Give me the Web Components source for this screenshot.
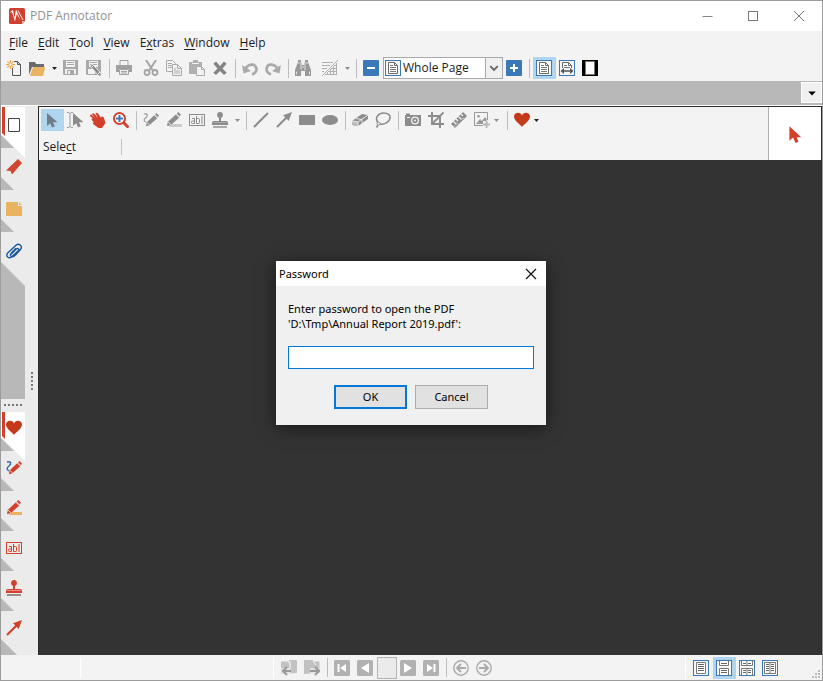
<!DOCTYPE html>
<html lang="en">
<head>
<meta charset="utf-8">
<title>PDF Annotator</title>
<style>
html, body { height: 100%; margin: 0; }
body { font: 12px/16px "Open Sans", "Noto Sans", sans-serif; color: #1c1c1c; }
</style>
</head>
<body>
<annotator-app></annotator-app>

<template id="app-template">
<style>
:host { display: flex; flex-direction: column; height: 100vh; box-sizing: border-box; border: 1px solid #9c9c9c; background: #f3f3f3; position: relative; overflow: hidden; }
.tabs { flex: none; height: 24px; background: #b8b8b8; border-bottom: 1px solid #fff; display: flex; justify-content: flex-end; align-items: flex-start; }
.tabs button { width: 21px; height: 21px; margin-top: 1px; padding: 0; border: 1px solid #fff; background: #f0f0f0; display: grid; place-items: center; }
.body { flex: 1; display: flex; min-height: 0; }
.work { flex: 1; display: flex; flex-direction: column; background: #333; border: 1px solid #2b2b2b; border-bottom: 0; min-width: 0; }
.tools { display: flex; background: #f3f3f3; height: 53px; flex: none; }
.left { flex: 1; padding: 2px; display: flex; flex-direction: column; }
.mode { display: flex; align-items: center; justify-content: space-between; width: 79px; height: 18px; margin-top: 7px; padding-left: 2px; border: 0; }
.mode i { width: 1px; height: 16px; background: #b9c4d2; }
.current { width: 52px; background: #fff; border-left: 1px solid #b0b0b0; display: grid; place-items: center; }
u { text-underline-offset: 2px; }
.overlay { position: absolute; inset: 5px 1px 0 0; display: grid; place-items: center; pointer-events: none; }
pass-dialog { pointer-events: auto; }
</style>
<title-bar>PDF Annotator</title-bar>
<menu-bar>
  <menu-item><u>F</u>ile</menu-item><menu-item><u>E</u>dit</menu-item><menu-item><u>T</u>ool</menu-item><menu-item><u>V</u>iew</menu-item><menu-item>E<u>x</u>tras</menu-item><menu-item><u>W</u>indow</menu-item><menu-item><u>H</u>elp</menu-item>
</menu-bar>
<tool-bar class="main">
  <tool-button icon="new" label="New"></tool-button><tool-button icon="open" label="Open" arrow="dark"></tool-button><tool-button icon="save" label="Save"></tool-button><tool-button icon="saveas" label="Save as"></tool-button>
  <tool-sep></tool-sep>
  <tool-button icon="print" label="Print"></tool-button><tool-gap></tool-gap><tool-button icon="cut" label="Cut"></tool-button><tool-button icon="copy" label="Copy"></tool-button><tool-button icon="paste" label="Paste"></tool-button><tool-button icon="delete" label="Delete"></tool-button>
  <tool-sep></tool-sep>
  <tool-button icon="undo" label="Undo"></tool-button><tool-button icon="redo" label="Redo"></tool-button>
  <tool-sep></tool-sep>
  <tool-button icon="find" label="Find"></tool-button><tool-gap></tool-gap><tool-button icon="grid" label="Grid" arrow="gray"></tool-button>
  <tool-sep></tool-sep>
  <tool-button icon="minus" label="Zoom out"></tool-button><zoom-box></zoom-box><tool-button icon="plus" label="Zoom in"></tool-button>
  <tool-sep></tool-sep>
  <tool-button icon="page" label="Whole page" active></tool-button><tool-button icon="pagewidth" label="Page width"></tool-button><tool-button icon="full" label="Full screen"></tool-button>
</tool-bar>
<div class="tabs"><button aria-label="Document list"><ui-icon name="downblack" size="10"></ui-icon></button></div>
<div class="body">
  <side-bar></side-bar>
  <main class="work">
    <div class="tools">
      <div class="left">
        <tool-bar>
          <tool-button icon="select" label="Select" active></tool-button><tool-button icon="textsel" label="Select text"></tool-button><tool-button icon="hand" label="Pan"></tool-button><tool-button icon="zoom" label="Zoom"></tool-button>
          <tool-sep></tool-sep>
          <tool-button icon="pen" label="Pen"></tool-button><tool-button icon="marker" label="Marker"></tool-button><tool-button icon="text" label="Text"></tool-button><tool-button icon="stamp" label="Stamp" arrow="gray"></tool-button>
          <tool-sep></tool-sep>
          <tool-button icon="line" label="Line"></tool-button><tool-button icon="arrow" label="Arrow"></tool-button><tool-button icon="rect" label="Rectangle"></tool-button><tool-button icon="ellipse" label="Ellipse"></tool-button>
          <tool-sep></tool-sep>
          <tool-button icon="eraser" label="Eraser"></tool-button><tool-button icon="lasso" label="Lasso"></tool-button>
          <tool-sep></tool-sep>
          <tool-button icon="camera" label="Snapshot"></tool-button><tool-button icon="crop" label="Crop"></tool-button><tool-button icon="ruler" label="Measure"></tool-button><tool-button icon="image" label="Insert image" arrow="gray" near></tool-button>
          <tool-sep></tool-sep>
          <tool-button icon="heart" label="Favorites" arrow="dark" near></tool-button>
        </tool-bar>
        <div class="mode"><span>Sele<u>c</u>t</span><i></i></div>
      </div>
      <div class="current"><ui-icon name="redcursor" size="18"></ui-icon></div>
    </div>
  </main>
</div>
<status-bar></status-bar>
<div class="overlay"><pass-dialog heading="Password">Enter password to open the PDF<br>'D:\Tmp\Annual Report 2019.pdf':</pass-dialog></div>
</template>

<script>
const pencil = (body, line) => `<path d="M1 15l1-4.500L11 2l3.500 3.500L5 14z" fill="${body}"/><path d="M11.500 1.500L13 0l3 3-1.500 1.500z" fill="${body}"/><path d="M2.300 10.700l3 3M10.500 2.300l3.500 3.500" stroke="${line}" stroke-width="1"/>`;
const abl = c => `<rect x=".5" y="2.500" width="15" height="11" fill="none" stroke="${c}"/><path d="M3 6.500H5.500V11.500H3.500Q2.500 11.500 2.500 10.500V10Q2.500 9 3.500 9H5.500M7.500 4V11.500H9.500Q10.500 11.500 10.500 10.500V7.500Q10.500 6.500 9.500 6.500H7.500M13 4V12" fill="none" stroke="${c}"/>`;
const stamp = (c, d, e) => `<circle cx="8" cy="2.900" r="2.900" fill="${c}"/><path d="M7 5h2v5H7z" fill="${c}"/><path d="M0 13V11Q0 9 2 9H14q2 0 2 2v2z" fill="${c}"/><path d="M1 10.500h14" stroke="${d}"/><path d="M1 15h14" stroke="${e}" stroke-width="1.400"/>`;
const arrowUp = c => `<path d="M1 15L12 4" stroke="${c}" stroke-width="2.200"/><path d="M16 0l-3.300 9-2.700-3-3-2.700z" fill="${c}"/>`;
const cursor = (c, x = 0) => `<path d="M${3 + x} 1v13l3.200-2.800L${8 + x} 15.500l2.800-1.200L${9 + x} 10.200H${13.500 + x}z" fill="${c}"/>`;
const heart = '<path d="M8 15C6 12 0 9 0 4.500 0 2 2 .8 4 .8c2 0 3.400 1 4 2.600C8.600 1.800 10 .8 12 .8c2 0 4 1.200 4 3.700C16 9 10 12 8 15z" fill="#c5391b"/>';
const frame = inner => `<rect x=".5" y=".5" width="15" height="15" fill="#f7f7f7" stroke="#3d78b6"/>${inner}`;
const sheet = '<path d="M3.500 2.500h6l3 3v8h-9z" fill="#fff" stroke="#6b6b6b"/><path d="M9.500 2.500v3h3" fill="none" stroke="#6b6b6b"/>';
const nav = d => `<rect width="16" height="16" rx="1.500" fill="#b1b1b1"/><path d="${d}" fill="#fff"/>`;
const icons = {
  logo: '<path d="M0 1.500Q0 0 1.500 0H14.500Q16 0 16 1.500V13l-3 3H1.500Q0 16 0 14.500z" fill="#cf412e"/><path d="M16 13l-3 3v-3z" fill="#f5b1a8"/><path d="M.5 4.500L4 2l1.500 8L7 1.500 11.500 12 7.800 6 6 13.500 3 4z" fill="#fff"/><path d="M9 2.500l5 9.500" stroke="#fff" stroke-width=".9"/>',
  minimize: '<path d="M3.500 8.500h10" stroke="#888"/>',
  maximize: '<rect x="3.500" y="3.500" width="9" height="9" fill="none" stroke="#777"/>',
  close: '<path d="M3 3l10 10M13 3L3 13" stroke="#777" fill="none"/>',
  closedark: '<path d="M3 3l10 10M13 3L3 13" stroke="#111" stroke-width="1.200" fill="none"/>',
  new: '<path d="M6.500 8V15.500h8V4.500l-3-3H8M11.500 1.500v3h3" fill="none" stroke="#555"/><path d="M4.500 0v9M0 4.500h9M1.300 1.300l6.400 6.400M7.700 1.300L1.300 7.700" stroke="#e8a94c" stroke-width="1.200"/><circle cx="4.500" cy="4.500" r="1.200" fill="#f3f3f3"/>',
  open: '<path d="M0 15V2h6l1 2h8v3H3z" fill="#6b6b6b"/><path d="M1 16L4 7h12.500L14 16z" fill="#eab362"/>',
  save: '<path d="M0 0h15v15H1L0 14z" fill="#a8a8a8"/><path d="M3 1h9v6H3z" fill="#f3f3f3"/><path d="M4 2.500h7M4 4.500h7" stroke="#a8a8a8"/><path d="M2 9h11v5H2z" fill="#f3f3f3"/><path d="M4 10h7v4H4z" fill="#a8a8a8"/><path d="M5 11h2v3H5z" fill="#f3f3f3"/>',
  saveas: '<path d="M0 0h15v15H1L0 14z" fill="#a8a8a8"/><path d="M3 1h9v6H3zM2 9h7v5H2z" fill="#f3f3f3"/><path d="M4 2.500h7M4 4.500h7" stroke="#a8a8a8"/><path d="M4 6l2-2 9 9v3h-2z" fill="#8b8b8b" stroke="#f3f3f3" stroke-width=".8"/><path d="M5.500 7.500l2-2M12 14l2-2" stroke="#f3f3f3"/>',
  print: '<path d="M4 5V.5h8V5" fill="#f3f3f3" stroke="#a0a0a0"/><path d="M0 5h16v7h-3V9H3v3H0z" fill="#a0a0a0"/><path d="M3.500 9.500h9v5h-9z" fill="#f3f3f3" stroke="#a0a0a0"/><path d="M5 11.500h6M5 13h6" stroke="#a0a0a0"/>',
  cut: '<path d="M3 0l6.500 10M13 0L6.500 10" stroke="#a5a5a5" stroke-width="2"/><circle cx="4" cy="12.500" r="2.500" fill="none" stroke="#a5a5a5" stroke-width="1.800"/><circle cx="12" cy="12.500" r="2.500" fill="none" stroke="#a5a5a5" stroke-width="1.800"/>',
  copy: '<path d="M.5.5h6l3 3v8h-9z" fill="#f3f3f3" stroke="#aaa"/><path d="M2 3.500h4M2 5.500h5M2 7.500h5" stroke="#aaa"/><path d="M6.500 4.500h5l4 4v7h-9z" fill="#f3f3f3" stroke="#aaa"/><path d="M11.500 4.500v4h4M8 9h2M8 11h6M8 13h6" fill="none" stroke="#aaa"/>',
  paste: '<path d="M0 2h4V0h5v2h4v4H7v8H0z" fill="#b0b0b0"/><path d="M3 3.500h7" stroke="#f3f3f3"/><path d="M7.500 6.500h5l3 3v6h-8z" fill="#f3f3f3" stroke="#aaa"/><path d="M12.500 6.500v3h3" fill="none" stroke="#aaa"/>',
  delete: '<path d="M4 1.500L8 6l4-4.500 2.700 2.200L10.500 8.500l4.200 4.200L12 15l-4-4-4 4-2.700-2.300L5.500 8.500 1.300 3.700z" fill="#858585"/>',
  undo: '<path d="M3 10C5.500 3.500 13 3 14.300 8c.8 3-1 5-4.300 6.500" fill="none" stroke="#aaa" stroke-width="2.700"/><path d="M0 5l1.500 8.500L9 11z" fill="#aaa"/>',
  redo: '<path d="M13 10C10.500 3.500 3 3 1.700 8c-.8 3 1 5 4.300 6.500" fill="none" stroke="#aaa" stroke-width="2.700"/><path d="M16 5l-1.500 8.500L7 11z" fill="#aaa"/>',
  find: '<path d="M3 0h3v2l1 3h2l1-3V0h3v2l3 8v6h-6v-5H6v5H0v-6l3-8z" fill="#999"/><path d="M6 4v6M10 4v6M7 7h2M1.500 11.500v3M14.500 11.500v3M3 3h3M10 3h3" stroke="#f3f3f3" stroke-width=".8"/>',
  grid: '<path d="M0 2.500h11M0 5.500h8M0 8.500h5M0 11.500h2M3 14.500h12M6 11.500h9M9 8.500h6M12 5.500h3M14.500 3v12M11.500 6v9M8.500 9v6M5.500 12v3" stroke="#b0b0b0"/><path d="M0 16L16 0" stroke="#b0b0b0"/>',
  minus: '<rect width="16" height="16" rx="1" fill="#3b78b7"/><path d="M4 8h8" stroke="#fff" stroke-width="2"/>',
  plus: '<rect width="16" height="16" rx="1" fill="#3b78b7"/><path d="M4 8h8M8 4v8" stroke="#fff" stroke-width="2"/>',
  page: frame(sheet + '<path d="M5 5.500h3M5 7.500h6M5 9.500h6M5 11.500h6" stroke="#777"/>'),
  pagewidth: frame(sheet + '<path d="M5 5.500h3M5 7.500h6" stroke="#777"/><path d="M2 8h12v6H2z" fill="#f5f5f5"/><path d="M3 11h10" stroke="#555" stroke-width="1.500"/><path d="M1.500 11L5 8v6zM14.500 11L11 8v6z" fill="#555"/>'),
  full: '<path d="M0 0h16v16H0z" fill="#000"/><path d="M3.500 1.500h9v13h-9z" fill="#fff" stroke="#777"/>',
  down: '<path d="M2 5l6 6 6-6" fill="none" stroke="#666" stroke-width="3"/>',
  downblack: '<path d="M2 5.500h12L8 12z" fill="#000"/>',
  select: cursor('#6f7d87'),
  redcursor: '<path d="M3 1v13l3.300-2.800L8.500 16l2.500-1.200-1.500-4H13.500z" fill="#d2402b"/>',
  textsel: '<path d="M0 .5h2l1 1 1-1h2M3 1v14M0 15.500h2l1-1 1 1h2" fill="none" stroke="#999"/>' + cursor('#8c8c8c', 3),
  hand: '<path d="M0 3q1-1 2 0l3 3-3-4q1-1.500 2.300-.3L8 6 5.500 1.500Q7 .2 8 1.500l3 4.300.3-1Q13 4 14 6l1.500 5-3.500 5H8.500L3 12q-.8-1.700 1-1.400L1.500 7.500Q1.500 6 3 6.500L.2 4.200z" fill="#d2402b"/>',
  zoom: '<circle cx="6.500" cy="6.500" r="5.500" fill="#fff" stroke="#d2402b" stroke-width="2"/><path d="M10.500 10.500l5 5" stroke="#d2402b" stroke-width="3"/><path d="M3 6.500h7M6.500 3v7" stroke="#3b78b7" stroke-width="2"/>',
  pen: '<path d="M1 2c4-1 4 2 2 3.500C1 7 0 9 3 10" fill="none" stroke="#999" stroke-width="1.200"/>' + '<g transform="translate(2 1) scale(.88)">' + pencil('#8c8c8c', '#f3f3f3') + '</g>',
  redpen: '<path d="M1 2c5-1 4 2 2 4C1 7.500 0 9 3 11" fill="none" stroke="#2f6fb5" stroke-width="1.500"/>' + '<g transform="translate(2 1) scale(.88)">' + pencil('#d2402b', '#ebebeb') + '</g>',
  marker: '<path d="M6 12h10v3H3z" fill="#ccc"/>' + '<g transform="scale(.94)">' + pencil('#8c8c8c', '#f3f3f3') + '</g>',
  redmarker: '<path d="M6 12h10v3H3z" fill="#eab362"/>' + '<g transform="scale(.94)">' + pencil('#d2402b', '#ebebeb') + '</g>',
  text: abl('#8c8c8c'), redtext: abl('#d2402b'),
  stamp: stamp('#8c8c8c', '#a8a8a8', '#8c8c8c'), redstamp: stamp('#d2402b', '#f08a90', '#77645c'),
  line: '<path d="M1 15L15 1" stroke="#8c8c8c" stroke-width="2"/>',
  arrow: arrowUp('#8c8c8c'), redarrow: arrowUp('#d2402b'),
  rect: '<path d="M0 3h16v10H0z" fill="#8c8c8c"/>',
  ellipse: '<ellipse cx="8" cy="8" rx="8" ry="5" fill="#8c8c8c"/>',
  eraser: '<path d="M0 9l10-7 6 1v4L6 14l-6-1z" fill="#8c8c8c"/><path d="M0 9l6 1v4l-6-1z" fill="#bbb"/><path d="M0 9l6 1L16 3M6 10v4M4 6.500l6 1v3.500" fill="none" stroke="#f3f3f3" stroke-width=".9"/>',
  lasso: '<path d="M3 11C-1 5 4 1 9 1c4 0 6.500 2 6 5-.5 4-6 7-10 6" fill="none" stroke="#8c8c8c" stroke-width="1.600"/><circle cx="3.500" cy="11.500" r="1.500" fill="#f3f3f3" stroke="#8c8c8c"/><path d="M3 13l-1.500 2.500" stroke="#8c8c8c" stroke-width="1.500"/>',
  camera: '<path d="M0 3h1V1.500h4V3h11v11H0z" fill="#8c8c8c"/><circle cx="10" cy="8.500" r="4" fill="#f3f3f3"/><circle cx="10" cy="8.500" r="2.700" fill="#8c8c8c"/><circle cx="10" cy="8.500" r="1" fill="#f3f3f3"/><path d="M2 5.500h3" stroke="#f3f3f3"/>',
  crop: '<path d="M4 0v12h12M0 4h12v12M4.500 11.500L15.500.5" fill="none" stroke="#8c8c8c" stroke-width="1.900"/>',
  ruler: '<path d="M0 12L12 0l4 4L4 16z" fill="#8c8c8c"/><path d="M2.500 9.500l3 3M5 7l2 2M7.500 4.500l3 3M10 2l2 2" stroke="#f3f3f3" stroke-width="1.200"/><path d="M3 13.500l1 1M6 10.500l1 1M11.500 6l1 1" stroke="#f3f3f3"/>',
  image: '<path d="M9 13.500H.5V.5h13V8" fill="none" stroke="#999"/><path d="M2 12l4-5 2 2 3-4 1.500 2v2H9v3z" fill="#999"/><circle cx="4.500" cy="4.300" r="1.300" fill="#999"/><path d="M12.500 9v7M9 12.500h7" stroke="#b9b9b9" stroke-width="2"/>',
  heart,
  pages: '<path d="M2.500 1.500h11v13h-11z" fill="#fff" stroke="#444"/>',
  bookmark: '<path d="M12 0l4 4L6 15.500 4.500 12 0 11.500z" fill="#cf472f"/>',
  note: '<path d="M0 1h12v4h4v10H0z" fill="#eab362"/><path d="M13 1l3 3h-3z" fill="#eab362"/>',
  clip: '<path d="M4.500 11.500l6-6q1.500-1 2 .2t-.5 2l-6.500 6q-2 1.500-3.800 0t0-4L10 2q2.200-2 4.200-.3t.5 4.300l-6 6.500q-2 1.700-3.500.7t0-3.200L10 5" transform="translate(0 .3)" fill="none" stroke="#1a58a0" stroke-width="1.400"/>',
  back: '<path d="M0 14V1.500h8V0h7l1 1v12z" fill="#c2c2c2"/><path d="M7 1.500L10 5M9 1v12" stroke="#f3f3f3"/><path d="M0 8h9v7H0z" fill="#f3f3f3" fill-opacity=".6"/><path d="M10 11H2M6 7l-4 4 4 4" fill="none" stroke="#999" stroke-width="2"/>',
  forward: '<path d="M0 14V0h9l1 1.500h5.500V13z" fill="#c2c2c2"/><path d="M9 1l3 4" stroke="#f3f3f3"/><path d="M6 8h9v7H6z" fill="#f3f3f3" fill-opacity=".6"/><path d="M6 11h9M11 7l4 4-4 4" fill="none" stroke="#999" stroke-width="2"/>',
  first: nav('M3.500 4h2v8h-2zM12 4v8L6 8z'), prev: nav('M12 3v10L4 8z'), next: nav('M4 3v10l8-5z'), last: nav('M10.500 4h2v8h-2zM4 4v8l6-4z'),
  left: '<circle cx="8" cy="8" r="7.200" fill="none" stroke="#aaa" stroke-width="1.400"/><path d="M13 8H4M8 4L4 8l4 4" fill="none" stroke="#aaa" stroke-width="1.900"/>',
  right: '<circle cx="8" cy="8" r="7.200" fill="none" stroke="#aaa" stroke-width="1.400"/><path d="M3 8h9M8 4l4 4-4 4" fill="none" stroke="#aaa" stroke-width="1.900"/>',
  single: frame('<path d="M3.500 2.500h9v11h-9z" fill="#fff" stroke="#777"/><path d="M5 4.500h6M5 6.500h6M5 8.500h6M5 10.500h6" stroke="#666"/>'),
  continuous: frame('<path d="M3.500 1v4.500h9V1M3.500 15V8.500h9V15" fill="#fff" stroke="#777"/><path d="M5 3.500h6M5 10.500h6M5 12.500h6" stroke="#666"/>'),
  facingcont: frame('<path d="M2.500 1v4.500h11V1M8 1v4.500M2.500 15V8.500h11V15M8 8v7" fill="#fff" stroke="#777"/><path d="M4 3.500h3M9 3.500h3M4 10.500h3M9 10.500h3M4 12.500h3M9 12.500h3" stroke="#666"/>'),
  facing: frame('<path d="M2.500 2.500h11v11h-11zM8 2v12" fill="#fff" stroke="#777"/><path d="M4 4.500h3M9 4.500h3M4 6.500h3M9 6.500h3M4 8.500h3M9 8.500h3M4 10.500h3M9 10.500h3" stroke="#666"/>'),
  grip: '<path d="M12 6h2v2h-2zM9 9h2v2H9zM12 9h2v2h-2zM6 12h2v2H6zM9 12h2v2H9zM12 12h2v2h-2z" fill="#bdbdbd"/>'
};

function define(name, render) {
  customElements.define(name, class extends HTMLElement {
    connectedCallback() {
      if (!this.shadowRoot) this.attachShadow({ mode: 'open' }).innerHTML = render(this);
    }
  });
}
const attr = (el, name, fallback = '') => el.getAttribute(name) ?? fallback;

define('ui-icon', el => {
  const s = attr(el, 'size', '16');
  return `<style>:host{display:inline-block;width:${s}px;height:${s}px;flex:none}svg{display:block}</style><svg width="${s}" height="${s}" viewBox="0 0 16 16" aria-hidden="true">${icons[attr(el, 'name')]}</svg>`;
});
define('title-bar', () => `<style>
:host{display:flex;align-items:center;height:30px;flex:none;background:#fff;color:#919191;padding-left:8px}
span{flex:1;padding-left:5px}
button{border:0;background:none;width:46px;height:29px;padding:0;display:grid;place-items:center}
</style><ui-icon name="logo"></ui-icon><span><slot></slot></span>
<button aria-label="Minimize"><ui-icon name="minimize"></ui-icon></button><button aria-label="Maximize"><ui-icon name="maximize"></ui-icon></button><button aria-label="Close"><ui-icon name="close"></ui-icon></button>`);
define('menu-bar', () => `<style>:host{display:flex;height:24px;flex:none;align-items:center;padding-left:3px}nav{display:flex}</style><nav><slot></slot></nav>`);
define('menu-item', () => `<style>:host{display:block}button{border:0;background:none;font:inherit;color:inherit;padding:0 5px;text-underline-offset:2px}</style><button><slot></slot></button>`);
define('tool-bar', () => `<style>:host{display:flex;height:22px;flex:none}:host(.main){height:26px;padding:2px;box-sizing:border-box}</style><slot></slot>`);
define('tool-gap', () => `<style>:host{display:block;width:4px}</style>`);
define('tool-sep', () => `<style>:host{display:block;width:1px;margin:0 3px;background:#bdbdbd;height:19px;align-self:center}</style>`);
define('tool-button', el => {
  const a = attr(el, 'arrow'), near = el.hasAttribute('near');
  return `<style>:host{display:block;flex:none}
button{display:flex;align-items:center;height:22px;padding:0;border:0;background:none}
.i{width:23px;height:22px;padding-left:3px;box-sizing:border-box;display:flex;align-items:center;background:${el.hasAttribute('active') ? '#afd5ef' : 'none'}}
.a{width:${near ? 10 : 11}px;display:flex;justify-content:${near ? 'flex-start' : 'center'}}
</style><button aria-label="${attr(el, 'label')}"><span class="i"><ui-icon name="${attr(el, 'icon')}"></ui-icon></span>${a ? `<span class="a"><svg width="5" height="3"><path d="M0 0h5L2.500 3z" fill="${a === 'dark' ? '#222' : '#8c8c8c'}"/></svg></span>` : ''}</button>`;
});
define('zoom-box', () => `<style>
:host{display:grid;grid-template-columns:19px 1fr 17px;align-items:center;width:120px;height:22px;box-sizing:border-box;border:1px solid #a9a9a9;background:#fff}
ui-icon{grid-row:1}.p{grid-column:1;margin-left:1px}
select{grid-row:1;grid-column:1/4;width:100%;height:20px;appearance:none;border:0;background:none;font:inherit;color:inherit;padding:0 0 0 19px;z-index:1}
.d{grid-row:1;grid-column:3;height:20px;display:grid;place-items:center;background:#f0f0f0;border-left:1px solid #a9a9a9}
</style><ui-icon class="p" name="page"></ui-icon><span class="d"><ui-icon name="down" size="10"></ui-icon></span><select aria-label="Zoom"><option>Whole Page</option></select>`);
define('side-tab', el => {
  const active = el.hasAttribute('active');
  const h = Number(attr(el, 'h', '42'));
  const t = h - 13;
  return `<style>:host{display:block;height:${h}px;position:relative}
button{width:24px;height:100%;padding:${attr(el, 'pad', '11')}px 0 0 5px;border:0;background:none;display:flex;align-items:flex-start}
ui-icon{position:relative}
svg{position:absolute;left:0;top:0;overflow:visible}
</style><svg width="24" height="${h}" aria-hidden="true">${active ? `<path d="M0 1h24v${h + 9}L0 ${t - 1}z" fill="#fff"/><path d="M1 1h3v${t}l-3-3z" fill="#d2402b"/>` : ''}${el.hasAttribute('end') ? '' : `<path d="M0 ${t}l13 13H0z" fill="#b8b8b8"/>`}</svg>
<button aria-label="${attr(el, 'label')}"><ui-icon name="${attr(el, 'icon')}"></ui-icon></button>`;
});
define('side-bar', () => `<style>
:host{display:flex;width:37px;flex:none;background:#ebebeb}
.tabs{width:24px;display:flex;flex-direction:column}
.fill{flex:1;margin-top:-12px;background:#b8b8b8;clip-path:polygon(0 0,100% 24px,100% 100%,0 100%)}
.dots{height:12px;display:flex;align-items:center;justify-content:center;gap:2px}
.dots i,.grip i{width:2px;height:2px;background:#777}
.grip{flex:1;display:flex;flex-direction:column;align-items:center;justify-content:center;gap:2px}
.end{height:16px;margin-top:-12px;width:16px;background:#b8b8b8;clip-path:polygon(0 0,100% 100%,0 100%)}
</style><div class="tabs">
<side-tab icon="pages" label="Pages" active></side-tab><side-tab icon="bookmark" label="Bookmarks"></side-tab><side-tab icon="note" label="Notes"></side-tab><side-tab icon="clip" label="Attachments" end></side-tab>
<div class="fill"></div><div class="dots"><i></i><i></i><i></i><i></i><i></i></div>
<side-tab h="40" pad="9" icon="heart" label="Favorites" active></side-tab><side-tab h="40" pad="9" icon="redpen" label="Pen"></side-tab><side-tab h="40" pad="9" icon="redmarker" label="Marker"></side-tab><side-tab h="40" pad="9" icon="redtext" label="Text"></side-tab><side-tab h="40" pad="9" icon="redstamp" label="Stamp"></side-tab><side-tab h="40" pad="9" icon="redarrow" label="Arrow" end></side-tab>
<div class="end"></div></div><div class="grip"><i></i><i></i><i></i><i></i><i></i></div>`);
define('status-bar', () => `<style>
:host{display:flex;height:25px;flex:none;align-items:center}
.c{border-right:1px solid #fff;height:20px;box-sizing:border-box}.c1{width:80px}.c2{width:193px}
.n{display:flex;align-items:center;padding-left:4px}
input{width:20px;height:22px;box-sizing:border-box;border:1px solid #b5b5b5;background:#ebebeb;padding:0;font:inherit;text-align:center}
.v{margin-left:auto;display:flex;align-items:center;border-left:1px solid #fff;padding:0 24px 0 4px}
.g{align-self:flex-end}
</style><div class="c c1"></div><div class="c c2"></div>
<div class="n"><tool-button icon="back" label="Previous document"></tool-button><tool-button icon="forward" label="Next document"></tool-button><tool-sep></tool-sep><tool-button icon="first" label="First page"></tool-button><tool-button icon="prev" label="Previous page"></tool-button><input aria-label="Page number"><tool-button icon="next" label="Next page"></tool-button><tool-button icon="last" label="Last page"></tool-button><tool-sep></tool-sep><tool-button icon="left" label="Back"></tool-button><tool-button icon="right" label="Forward"></tool-button></div>
<div class="v"><tool-button icon="single" label="Single page"></tool-button><tool-button icon="continuous" label="Continuous" active></tool-button><tool-button icon="facingcont" label="Facing continuous"></tool-button><tool-button icon="facing" label="Facing"></tool-button></div><ui-icon class="g" name="grip"></ui-icon>`);
define('pass-dialog', el => `<style>
:host{display:block;width:270px;color:#000;font-family:"Noto Sans","Open Sans",sans-serif;font-size:11px}
dialog{position:static;display:block;width:100%;margin:0;padding:0;border:0;background:#f0f0f0;color:inherit;box-shadow:0 3px 16px rgba(0,0,0,.55)}
header{height:25px;display:flex;align-items:center;justify-content:space-between;background:#fff;padding-left:3px}
header button{border:0;background:none;padding:0;width:30px;height:24px;display:grid;place-items:center}
form{padding:15px 12px 16px}
label{display:block;line-height:15px}
input{display:block;width:100%;height:23px;box-sizing:border-box;border:1px solid #0078d7;background:#fff;margin:15px 0 16px;padding:2px;font:inherit;outline:0}
.b{display:flex;justify-content:center;gap:8px}
.b button{width:73px;height:24px;box-sizing:border-box;border:1px solid #adadad;background:#e1e1e1;font:inherit;color:inherit;padding:0}
.b .ok{border:2px solid #0078d7}
</style><dialog open aria-labelledby="t"><header><span id="t">${attr(el, 'heading')}</span><button aria-label="Close"><ui-icon name="closedark"></ui-icon></button></header>
<form><label for="p"><slot></slot></label><input id="p" type="password"><div class="b"><button type="button" class="ok">OK</button><button type="button">Cancel</button></div></form></dialog>`);
define('annotator-app', () => document.getElementById('app-template').innerHTML);
</script>
</body>
</html>
